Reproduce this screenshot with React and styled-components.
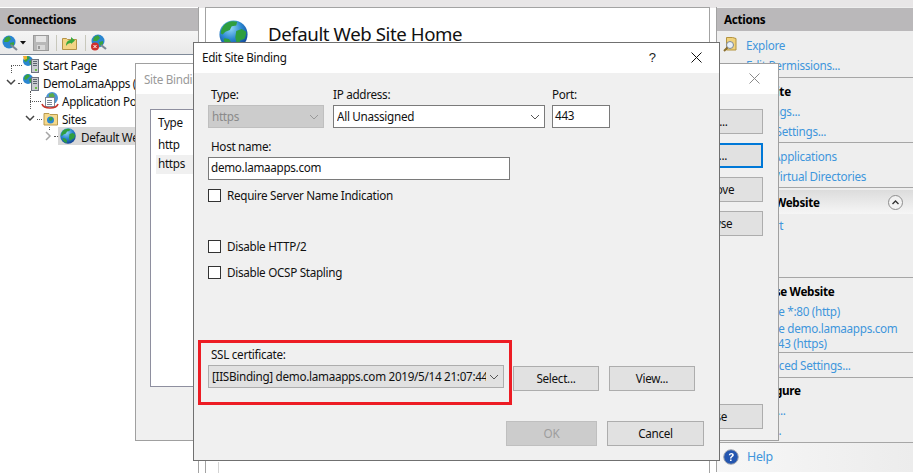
import React from "react";
import styled, { createGlobalStyle } from "styled-components";

const Global = createGlobalStyle`
  html, body { margin: 0; padding: 0; background: #fff; overflow: hidden; }
  #root { width: 913px; height: 473px; }
  * { box-sizing: border-box; }
`;

const Page = styled.div`
  position: relative;
  width: 913px;
  height: 473px;
  overflow: hidden;
  display: flex;
  gap: 6px;
  padding-top: 7px;
  background: linear-gradient(#e8e6e7 0, #e8e6e7 8px, #fff 8px);
  font-family: "Noto Sans", "Open Sans", sans-serif;
  font-size: 11.7px;
  letter-spacing: -0.3px;
  line-height: 16px;
  color: #111;
`;

const LeftPanel = styled.div`
  width: 199px;
  flex: none;
  background: #fff;
  border-right: 1px solid #a3a3a3;
`;

const PanelHeader = styled.div`
  height: 23px;
  margin-top: 1px;
  padding: 3px 0 0 7px;
  background: #bab8ba;
  font-weight: 700;
  color: #000;
`;

const Toolbar = styled.div`
  height: 24px;
  display: flex;
  align-items: center;
  padding-left: 2px;
  background: linear-gradient(#f4f4f4, #e9e9e9);
  border-bottom: 1px solid #7f8a99;
`;

const ToolItem = styled.span`
  display: flex;
  margin-left: ${(p) => p.$ml || 0}px;
`;

const ToolSep = styled.span`
  width: 1px;
  height: 16px;
  margin-left: ${(p) => p.$ml}px;
  background: #c8c8bc;
`;

const TreeRow = styled.div`
  position: relative;
  height: 18px;
  display: flex;
  align-items: center;
  gap: 3px;
  padding-left: ${(p) => p.$indent}px;
  white-space: nowrap;
`;

const TreeLabel = styled.span`
  padding-top: 2px;
`;

const Selected = styled.span`
  display: flex;
  align-items: center;
  gap: 5px;
  flex: 1;
  height: 18px;
  background: #d9d9d9;
  padding-left: 2px;
`;

const Dots = styled.i`
  position: absolute;
  left: ${(p) => p.$x}px;
  top: ${(p) => p.$y}px;
  width: ${(p) => p.$w || 1}px;
  height: ${(p) => p.$h || 1}px;
  border-left: ${(p) => (p.$h ? "1px dotted #555" : "0")};
  border-top: ${(p) => (p.$w ? "1px dotted #555" : "0")};
`;

const Caret = styled.svg`
  position: absolute;
  left: ${(p) => p.$x}px;
  top: ${(p) => p.$y || 6}px;
`;

const CenterPanel = styled.div`
  width: 505px;
  flex: none;
  background: #fff;
  border: 1px solid #a3a3a3;
  border-width: 1px 1px 0 1px;
  display: flex;
  flex-direction: column;
`;

const CenterHead = styled.div`
  height: 454px;
  display: flex;
  align-items: flex-start;
  gap: 20px;
  padding: 12px 0 0 13px;
`;

const CenterTitle = styled.h1`
  margin: 1px 0 0;
  font-size: 18.67px;
  font-weight: 400;
  line-height: 26px;
  letter-spacing: -0.42px;
  color: #111;
`;

const CenterFoot = styled.div`
  flex: 1;
  margin-left: 12px;
  border-left: 1px solid #d4d4d4;
`;

const RightPanel = styled.div`
  flex: 1;
  margin-bottom: 1px;
  background: #eeeeee;
  border-left: 1px solid #a3a3a3;
  display: flex;
  flex-direction: column;
`;

const ActionGroup = styled.div`
  border-bottom: 1px solid #a6a6a6;
  padding: ${(p) => p.$pad || "3px 0 3px 29px"};
  height: ${(p) => p.$h}px;
  flex: none;
`;

const ActionHead = styled.div`
  font-weight: 700;
  color: #000;
  height: 20px;
  display: flex;
  align-items: center;
`;

const ActionLink = styled.div`
  position: relative;
  color: #3f96dc;
  height: ${(p) => p.$h || 20}px;
  line-height: 20px;
  white-space: nowrap;
`;

const TightLine = styled.div`
  line-height: 15px;
`;

const ActionIcon = styled.span`
  position: absolute;
  left: -23px;
  top: 1px;
  display: flex;
`;

const Band = styled.div`
  height: 24px;
  margin-top: 2px;
  padding: 0 10px;
  display: flex;
  align-items: center;
  justify-content: space-between;
  font-weight: 700;
  color: #000;
  background: linear-gradient(#dcdcdc, #f6f6f6);
`;

const RoundBtn = styled.span`
  width: 15px;
  height: 15px;
  border-radius: 50%;
  border: 1px solid #8d8d8d;
  background: #f2f2f2;
  display: flex;
  align-items: center;
  justify-content: center;
`;

const HelpRow = styled.div`
  flex: 1;
  display: flex;
  align-items: center;
  gap: 8px;
  padding: 0 0 2px 6px;
  color: #3f96dc;
  font-size: 12.4px;
  background: linear-gradient(90deg, #f7f7f7, #ececec);
`;

/* windows floating over the manager */
const Win = styled.div`
  position: absolute;
  left: ${(p) => p.$x}px;
  top: ${(p) => p.$y}px;
  width: ${(p) => p.$w}px;
  height: ${(p) => p.$h}px;
  background: #f0f0f0;
  border: 1px solid ${(p) => p.$line};
  display: flex;
  flex-direction: column;
`;

const TitleBar = styled.div`
  height: ${(p) => p.$h}px;
  flex: none;
  background: #fff;
  display: flex;
  align-items: center;
  padding: 0 ${(p) => p.$pr}px 1px 8px;
  color: ${(p) => p.$color || "#111"};
`;

const TitleText = styled.span`
  flex: 1;
  padding-bottom: ${(p) => p.$pb || 0}px;
`;

const HelpMark = styled.span`
  margin-right: 35px;
  font-family: "Liberation Sans", sans-serif;
  font-size: 13px;
  letter-spacing: 0;
  color: #222;
`;

const BackBody = styled.div`
  flex: 1;
  display: flex;
  justify-content: space-between;
  padding: 15px 15px 14px 14px;
`;

const ListBox = styled.div`
  width: 400px;
  height: 278px;
  background: #fff;
  border: 1px solid #8e8f9f;
  padding: 4px 0 0 5px;
`;

const ListHead = styled.div`
  padding-left: 2px;
  height: 22px;
`;

const ListRow = styled.div`
  height: 19px;
  line-height: 16px;
  padding-left: 2px;
  background: ${(p) => (p.$on ? "#f0f0f0" : "transparent")};
`;

const SideButtons = styled.div`
  width: 100px;
  display: flex;
  flex-direction: column;
  gap: 9px;
`;

const Btn = styled.div`
  width: ${(p) => p.$w || 86}px;
  height: 25px;
  flex: none;
  display: flex;
  align-items: center;
  justify-content: center;
  padding-bottom: 2px;
  background: ${(p) => (p.$off ? "#cccccc" : "#e1e1e1")};
  border: ${(p) => (p.$focus ? "2px solid #0078d7" : p.$off ? "1px solid #bfbfbf" : "1px solid #adadad")};
  color: ${(p) => (p.$off ? "#9d9d9d" : "#111")};
  margin-top: ${(p) => p.$mt || 0}px;
  margin-left: ${(p) => p.$ml || 0}px;
`;

const Body = styled.div`
  flex: 1;
  padding: 14px 15px 13px 14px;
  display: flex;
  flex-direction: column;
`;

const Row = styled.div`
  display: flex;
  gap: ${(p) => p.$gap || 0}px;
  margin-top: ${(p) => p.$mt || 0}px;
`;

const Field = styled.div`
  display: flex;
  flex-direction: column;
  width: ${(p) => p.$w}px;
  margin-left: ${(p) => p.$ml || 0}px;
`;

const Label = styled.label`
  height: 18px;
  line-height: 14px;
  padding-left: ${(p) => p.$pl ?? 3}px;
  color: #111;
  white-space: nowrap;
`;

const Input = styled.div`
  height: 23px;
  background: #fff;
  border: 1px solid #7a7a7a;
  padding: 1px 2px;
  white-space: nowrap;
`;

const Select = styled.div`
  height: 23px;
  display: flex;
  align-items: center;
  gap: 3px;
  padding: 0 4px 0 3px;
  background: ${(p) => (p.$off ? "#cccccc" : p.$flat ? "#e1e1e1" : "#fff")};
  border: 1px solid ${(p) => (p.$off ? "#bfbfbf" : p.$flat ? "#adadad" : "#7a7a7a")};
  color: ${(p) => (p.$off ? "#8a8a8a" : "#111")};
`;

const SelectText = styled.span`
  flex: 1;
  min-width: 0;
  padding-bottom: 2px;
  overflow: hidden;
  white-space: nowrap;
`;

const Check = styled.label`
  display: flex;
  align-items: flex-start;
  gap: 6px;
  height: 14px;
  line-height: 12px;
  margin-top: ${(p) => p.$mt}px;
`;

const Box = styled.span`
  width: 13px;
  height: 13px;
  background: #fff;
  border: 1px solid #333;
`;

const Footer = styled.div`
  display: flex;
  justify-content: flex-end;
  gap: 10px;
  margin-top: 30px;
`;

const RedBox = styled.div`
  position: absolute;
  left: 198px;
  top: 340px;
  width: 314px;
  height: 65px;
  border: 3px solid #ed1c24;
  pointer-events: none;
`;

const Globe = ({ size = 16 }) => (
  <svg width={size} height={size} viewBox="0 0 32 32">
    <defs>
      <radialGradient id="sea" cx="40%" cy="28%" r="78%">
        <stop offset="0" stopColor="#8fd6f8" />
        <stop offset="0.5" stopColor="#2a86d0" />
        <stop offset="1" stopColor="#0e3a8c" />
      </radialGradient>
    </defs>
    <circle cx="16" cy="16" r="15.500" fill="url(#sea)" />
    <path
      d="M9 3c4-2 8-2 11-1l-1 4-5 1-2 4-5 2-3 3-2-1c0-5 3-10 7-12zM19 12l6-2 5 3c0 3-1 6-2 8l-4 1-2 3-3-1-1-5zM6 20l5 1 3 4-1 5c-4-1-7-5-8-8z"
      fill="#2f9e3f"
    />
  </svg>
);

const ServerIcon = ({ star }) => (
  <svg width="18" height="18" viewBox="0 0 18 18">
    <circle cx="6" cy="6" r="5" fill="#2a86d0" />
    <path d="M3 3l3-2 2 2-2 2-2 2-2-1zM7 6l3-1 0 3-2 2z" fill="#3ba33c" />
    {star && <path d="M1 1l4 0 0 3-3 1z" fill="#f0b030" />}
    <rect x="9.500" y="4.500" width="7" height="13" fill="#c9ccd0" stroke="#6d7480" />
    <path d="M11 6.500h4M11 8.500h4M11 10.500h4" stroke="#5d6570" />
    <rect x="13" y="14" width="2" height="2" fill="#6dc04a" />
  </svg>
);

const PoolIcon = () => (
  <svg width="18" height="18" viewBox="0 0 18 18">
    <circle cx="11" cy="7" r="6" fill="#4b93d6" />
    <path d="M8 3l4-1 2 3-3 3-3-1z" fill="#5aaa4c" />
    <rect x="4.500" y="6.500" width="9" height="9" fill="#fff" stroke="#7d8794" />
    <path d="M6 9.500h5M6 11.500h5M6 13.500h5" stroke="#7d8794" />
    <path d="M1 13c1 3 3 4 8 4s7-1 8-4" fill="none" stroke="#c8362c" strokeWidth="1.600" />
  </svg>
);

const SitesIcon = () => (
  <svg width="16" height="16" viewBox="0 0 16 16">
    <path d="M1 3.500h5l1 1h7.500v10.500H1z" fill="#f6d98c" stroke="#b99a4e" />
    <circle cx="7.500" cy="10" r="3.500" fill="#2a86d0" />
    <path d="M6 8l3-1 1 2-2 2-2-1z" fill="#3ba33c" />
  </svg>
);

const SaveIcon = () => (
  <svg width="16" height="16" viewBox="0 0 16 16">
    <rect x="0.500" y="0.500" width="15" height="15" fill="#b8b8b8" stroke="#9a9a9a" />
    <rect x="3" y="1" width="10" height="6" fill="#e6e6e6" />
    <rect x="4" y="10" width="8" height="5" fill="#d8d8d8" />
    <rect x="5" y="11" width="2" height="3" fill="#999" />
  </svg>
);

const UpFolderIcon = () => (
  <svg width="15" height="15" viewBox="0 0 15 15">
    <path d="M0.500 3.500h4l1 1h9v10H0.500z" fill="#f3d484" stroke="#b49347" />
    <path d="M4 11c0-4 2-6 5-6V2l4 3.500-4 3.500V8c-2 0-4 1-5 3z" fill="#39a83d" />
  </svg>
);

const DisconnectIcon = () => (
  <svg width="17" height="17" viewBox="0 0 17 17">
    <circle cx="8" cy="7" r="6.500" fill="#2a86d0" />
    <path d="M4 3l4-2 2 3-3 3-4 0zM9 8l4-1 0 3-3 2z" fill="#3ba33c" />
    <path d="M11 11l5 4" stroke="#7d8794" strokeWidth="2.200" />
    <circle cx="5" cy="12.500" r="4" fill="#d0312d" />
    <path d="M3.500 11l3 3M6.500 11l-3 3" stroke="#fff" />
  </svg>
);

const ConnectIcon = () => (
  <svg width="16" height="16" viewBox="0 0 16 16">
    <circle cx="7" cy="7" r="6.500" fill="#2a86d0" />
    <path d="M3 3l4-2 2 3-3 3-4 0zM8 8l4-1 0 3-3 2z" fill="#3ba33c" />
    <path d="M9 10l6 5" stroke="#7d8794" strokeWidth="2.200" />
  </svg>
);

const Down = () => (
  <svg width="6" height="4" viewBox="0 0 6 4">
    <path d="M0 0h6L3 3.500z" fill="#111" />
  </svg>
);

const Chevron = ({ color = "#555" }) => (
  <svg width="10" height="6" viewBox="0 0 10 6">
    <path d="M1 1l4 4 4-4" fill="none" stroke={color} />
  </svg>
);

const Close = ({ color = "#111" }) => (
  <svg width="11" height="11" viewBox="0 0 11 11">
    <path d="M0.500 0.500l10 10M10.500 0.500l-10 10" stroke={color} />
  </svg>
);

const ExploreIcon = () => (
  <svg width="15" height="16" viewBox="0 0 15 16">
    <path d="M3.500 1.500h6l3.500 1v11.500H3.500z" fill="#f0d27c" stroke="#b4933f" />
    <circle cx="7" cy="9" r="3.500" fill="#e8f0f8" stroke="#7d8794" />
    <path d="M4.500 11.500L1 15" stroke="#8a6d2c" strokeWidth="2" />
  </svg>
);

const HelpIcon = () => (
  <svg width="16" height="16" viewBox="0 0 16 16">
    <circle cx="8" cy="8" r="7.300" fill="#2456b0" stroke="#a4a8b0" />
    <path
      d="M5.800 6.200C6 4.700 7.100 4 8.400 4c1.500 0 2.400.8 2.400 2 0 1-.6 1.500-1.300 2-.6.400-.9.700-1 1.500H7c0-1.200.5-1.800 1.200-2.300.6-.4.900-.7.900-1.100 0-.5-.3-.8-.8-.8-.6 0-1 .4-1.100 1zM7 10.500h1.600V12H7z"
      fill="#fff"
    />
  </svg>
);

const App = () => {
  return (
    <Page>
      <Global />
      <LeftPanel>
        <PanelHeader>Connections</PanelHeader>
        <Toolbar>
          <ConnectIcon />
          <ToolItem $ml={2}><Down /></ToolItem>
          <ToolItem $ml={7}><SaveIcon /></ToolItem>
          <ToolSep $ml={7} />
          <ToolItem $ml={5}><UpFolderIcon /></ToolItem>
          <ToolSep $ml={8} />
          <ToolItem $ml={4}><DisconnectIcon /></ToolItem>
        </Toolbar>
        <div>
          <TreeRow $indent={22}>
            <Dots $x={11} $y={10} $w={11} />
            <Dots $x={11} $y={10} $h={8} />
            <ServerIcon star />
            <TreeLabel>Start Page</TreeLabel>
          </TreeRow>
          <TreeRow $indent={22}>
            <Caret $x={6} width="10" height="7" viewBox="0 0 10 7">
              <path d="M1 1l4 4 4-4" fill="none" stroke="#444" strokeWidth="1.500" />
            </Caret>
            <Dots $x={18} $y={10} $w={4} />
            <ServerIcon />
            <TreeLabel>DemoLamaApps (</TreeLabel>
          </TreeRow>
          <TreeRow $indent={41}>
            <Dots $x={30} $y={0} $h={18} />
            <Dots $x={30} $y={10} $w={11} />
            <PoolIcon />
            <TreeLabel>Application Pools</TreeLabel>
          </TreeRow>
          <TreeRow $indent={43}>
            <Caret $x={25} width="10" height="7" viewBox="0 0 10 7">
              <path d="M1 1l4 4 4-4" fill="none" stroke="#444" strokeWidth="1.500" />
            </Caret>
            <Dots $x={37} $y={10} $w={5} />
            <SitesIcon />
            <TreeLabel>Sites</TreeLabel>
          </TreeRow>
          <TreeRow $indent={58}>
            <Dots $x={49} $y={0} $h={3} />
            <Caret $x={45} $y={4} width="7" height="10" viewBox="0 0 7 10">
              <path d="M1 1l4 4-4 4" fill="none" stroke="#a6a6a6" strokeWidth="1.500" />
            </Caret>
            <Dots $x={54} $y={9} $w={4} />
            <Selected>
              <Globe size={16} />
              <TreeLabel>Default Web Site</TreeLabel>
            </Selected>
          </TreeRow>
        </div>
      </LeftPanel>

      <CenterPanel>
        <CenterHead>
          <Globe size={29} />
          <CenterTitle>Default Web Site Home</CenterTitle>
        </CenterHead>
        <CenterFoot />
      </CenterPanel>

      <RightPanel>
        <PanelHeader>Actions</PanelHeader>
        <ActionGroup $h={47} $pad="4px 0 0 29px">
          <ActionLink>
            <ActionIcon><ExploreIcon /></ActionIcon>
            Explore
          </ActionLink>
          <ActionLink>Edit Permissions...</ActionLink>
        </ActionGroup>
        <ActionGroup $h={65}>
          <ActionHead>Edit Site</ActionHead>
          <ActionLink>Bindings...</ActionLink>
          <ActionLink>Basic Settings...</ActionLink>
        </ActionGroup>
        <ActionGroup $h={45}>
          <ActionLink>View Applications</ActionLink>
          <ActionLink>View Virtual Directories</ActionLink>
        </ActionGroup>
        <Band>
          <span>Manage Website</span>
          <RoundBtn>
            <svg width="7" height="5" viewBox="0 0 7 5">
              <path d="M0.500 4l3-3 3 3" fill="none" stroke="#333" strokeWidth="1.400" />
            </svg>
          </RoundBtn>
        </Band>
        <ActionGroup $h={64} $pad="1px 0 0 29px">
          <ActionLink>Restart</ActionLink>
        </ActionGroup>
        <ActionGroup $h={75}>
          <ActionHead>Browse Website</ActionHead>
          <ActionLink>Browse *:80 (http)</ActionLink>
          <ActionLink $h={30}>
            <TightLine>
              Browse demo.lamaapps.com
              <br />
              on *:443 (https)
            </TightLine>
          </ActionLink>
        </ActionGroup>
        <ActionGroup $h={25} $pad="2px 0 0 29px">
          <ActionLink>Advanced Settings...</ActionLink>
        </ActionGroup>
        <ActionGroup $h={65} $pad="2px 0 0 29px">
          <ActionHead>Configure</ActionHead>
          <ActionLink>Limits...</ActionLink>
          <ActionLink>HSTS...</ActionLink>
        </ActionGroup>
        <HelpRow>
          <HelpIcon />
          Help
        </HelpRow>
      </RightPanel>

      <Win $x={135} $y={63} $w={644} $h={378} $line="#a0a0a0">
        <TitleBar $h={30} $pr={18} $color="#9a9a9a">
          <TitleText>Site Bindings</TitleText>
          <Close color="#8a8a8a" />
        </TitleBar>
        <BackBody>
          <ListBox>
            <ListHead>Type</ListHead>
            <ListRow>http</ListRow>
            <ListRow $on>https</ListRow>
          </ListBox>
          <SideButtons>
            <Btn $w={100}>Add...</Btn>
            <Btn $w={100} $focus>Edit...</Btn>
            <Btn $w={100}>Remove</Btn>
            <Btn $w={100}>Browse</Btn>
            <Btn $w={100} $mt={159}>Close</Btn>
          </SideButtons>
        </BackBody>
      </Win>

      <Win $x={193} $y={42} $w={527} $h={419} $line="#707070">
        <TitleBar $h={30} $pr={17}>
          <TitleText $pb={2}>Edit Site Binding</TitleText>
          <HelpMark>?</HelpMark>
          <Close />
        </TitleBar>
        <Body>
          <Row $gap={9}>
            <Field $w={116}>
              <Label>Type:</Label>
              <Select $off>
                <SelectText>https</SelectText>
                <Chevron color="#999" />
              </Select>
            </Field>
            <Field $w={212}>
              <Label $pl={0}>IP address:</Label>
              <Select>
                <SelectText>All Unassigned</SelectText>
                <Chevron />
              </Select>
            </Field>
            <Field $w={58} $ml={-2}>
              <Label $pl={0}>Port:</Label>
              <Input>443</Input>
            </Field>
          </Row>
          <Row $mt={11}>
            <Field $w={302}>
              <Label>Host name:</Label>
              <Input>demo.lamaapps.com</Input>
            </Field>
          </Row>
          <Check $mt={9}><Box />Require Server Name Indication</Check>
          <Check $mt={37}><Box />Disable HTTP/2</Check>
          <Check $mt={12}><Box />Disable OCSP Stapling</Check>
          <Row $gap={9} $mt={67}>
            <Field $w={296}>
              <Label>SSL certificate:</Label>
              <Select $flat>
                <SelectText>[IISBinding] demo.lamaapps.com 2019/5/14 21:07:44</SelectText>
                <Chevron />
              </Select>
            </Field>
            <Btn $mt={19}>Select...</Btn>
            <Btn $mt={19} $ml={1}>View...</Btn>
          </Row>
          <Footer>
            <Btn $w={91} $off>OK</Btn>
            <Btn $w={97}>Cancel</Btn>
          </Footer>
        </Body>
      </Win>

      <RedBox />
    </Page>
  );
};

export default App;
